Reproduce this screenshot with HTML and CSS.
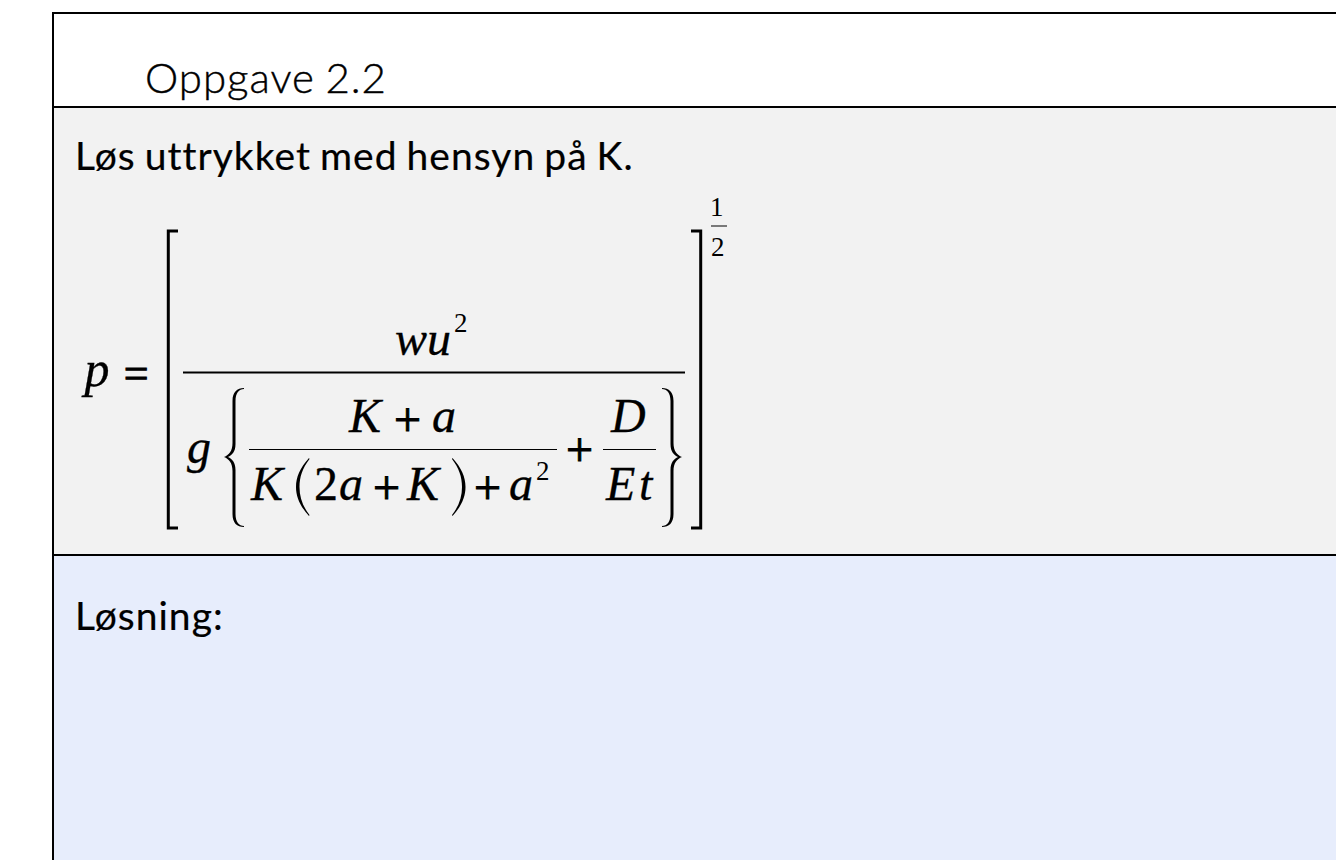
FILE: index.html
```html
<!DOCTYPE html>
<html lang="no">
<head>
<meta charset="utf-8">
<title>Oppgave 2.2</title>
<link rel="stylesheet" href="styles.css">
</head>
<body>
<main class="frame">
  <header class="head"><h1 class="title">Oppgave 2.2</h1></header>
  <section class="task">
    <p class="text">Løs uttrykket med hensyn på K.</p>
    <svg class="formula" viewBox="60 190 680 350" width="680" height="350" role="img" aria-label="Formel">
      <defs>
        <path id="brace" d="M244 388C237 388 232.500 392 232.500 401V443C232.500 451 229 455 224 457C229 459 232.500 463 232.500 471V514C232.500 523 237 527 244 527L244 526C239 526 235.500 522 235.500 514V470C235.500 462 232 459 228 457C232 455 235.500 452 235.500 444V401C235.500 393 239 389 244 389Z"/>
        <path id="paren" d="M309 458C300 468 296 477 296 487C296 497 300 506 309 516L309.500 515C302.500 506 299.500 497 299.500 487C299.500 477 302.500 468 309.500 459Z"/>
      </defs>
      <g class="rules">
        <path class="thick" d="M178 231H168.300V528H178"/>
        <path class="thick" d="M691 231H700.700V528H691"/>
        <path class="main" d="M183 372.500H685"/>
        <path class="thin" d="M249 449.500H557M603 449.500H656M711 226H727"/>
      </g>
      <g class="curves">
        <use href="#brace"/>
        <use href="#brace" transform="matrix(-1 0 0 1 906 0)"/>
        <use href="#paren"/>
        <use href="#paren" transform="matrix(-1 0 0 1 761.500 0)"/>
      </g>
      <g class="math">
        <text class="it big" x="84.500" y="385.500">p</text>
        <text class="sym eq" x="123.700" y="388">=</text>
        <text class="it" x="395" y="355">wu</text>
        <text class="small" x="454" y="332">2</text>
        <text class="it" x="187" y="463">g</text>
        <text class="it" x="349" y="432">K</text>
        <text class="sym" x="394" y="436">+</text>
        <text class="it" x="432" y="432">a</text>
        <text class="it" x="251" y="500">K</text>
        <text x="314" y="500">2</text>
        <text class="it" x="339" y="500">a</text>
        <text class="sym" x="373" y="504">+</text>
        <text class="it" x="407" y="500">K</text>
        <text class="sym" x="474" y="504">+</text>
        <text class="it" x="509" y="500">a</text>
        <text class="small" x="536" y="480">2</text>
        <text class="sym" x="566" y="466">+</text>
        <text class="it" x="611" y="432">D</text>
        <text class="it" x="606" y="500">E</text>
        <text class="it" x="639" y="500">t</text>
        <text class="small" x="710" y="216">1</text>
        <text class="small" x="711" y="256">2</text>
      </g>
    </svg>
  </section>
  <section class="answer">
    <p class="text">Løsning:</p>
  </section>
</main>
</body>
</html>
```
FILE: styles.css
```css
html, body {
  margin: 0;
  height: 860px;
  overflow: hidden;
  background: #fff;
}

.frame {
  margin: 12px 0 0 52px;
  height: 848px;
  box-sizing: border-box;
  border-top: 2px solid #000;
  border-left: 2px solid #000;
  display: flex;
  flex-direction: column;
  font-family: Lato, "Liberation Sans", sans-serif;
  color: #000;
}

.head {
  height: 92px;
  box-sizing: border-box;
  padding-left: 91px;
  display: flex;
  align-items: flex-end;
}

.title {
  margin: 0 0 5px;
  font-size: 42px;
  line-height: 48px;
  font-weight: 300;
  letter-spacing: 1px;
  word-spacing: -2px;
  -webkit-text-stroke: 0.4px #000;
}

.task {
  height: 448px;
  box-sizing: border-box;
  background: #f2f2f2;
  border-top: 2px solid #000;
  padding-top: 25px;
}

.text {
  margin: 0 0 0 21px;
  font-size: 39px;
  line-height: 44px;
  letter-spacing: 1.03px;
  word-spacing: -2px;
  -webkit-text-stroke: 0.2px #000;
}

.formula {
  display: block;
  margin: 13px 0 0 6px;
  overflow: visible;
}

.rules path {
  fill: none;
  stroke: #000;
}

.rules .thick { stroke-width: 3; }
.rules .main { stroke-width: 2; }
.rules .thin { stroke-width: 1; }

.curves { fill: #000; }

.math text {
  font-family: "Liberation Serif", serif;
  font-size: 48px;
  fill: #000;
  stroke: #000;
  stroke-width: 0.3px;
}

.math .it { font-style: italic; }
.math .big { font-size: 50px; }
.math .small { font-size: 27px; stroke-width: 0; }
.math .sym { stroke-width: 1px; }
.math .eq { font-size: 44px; }

.answer {
  flex: 1;
  background: #e7edfc;
  border-top: 2px solid #000;
  padding-top: 37px;
}
```
